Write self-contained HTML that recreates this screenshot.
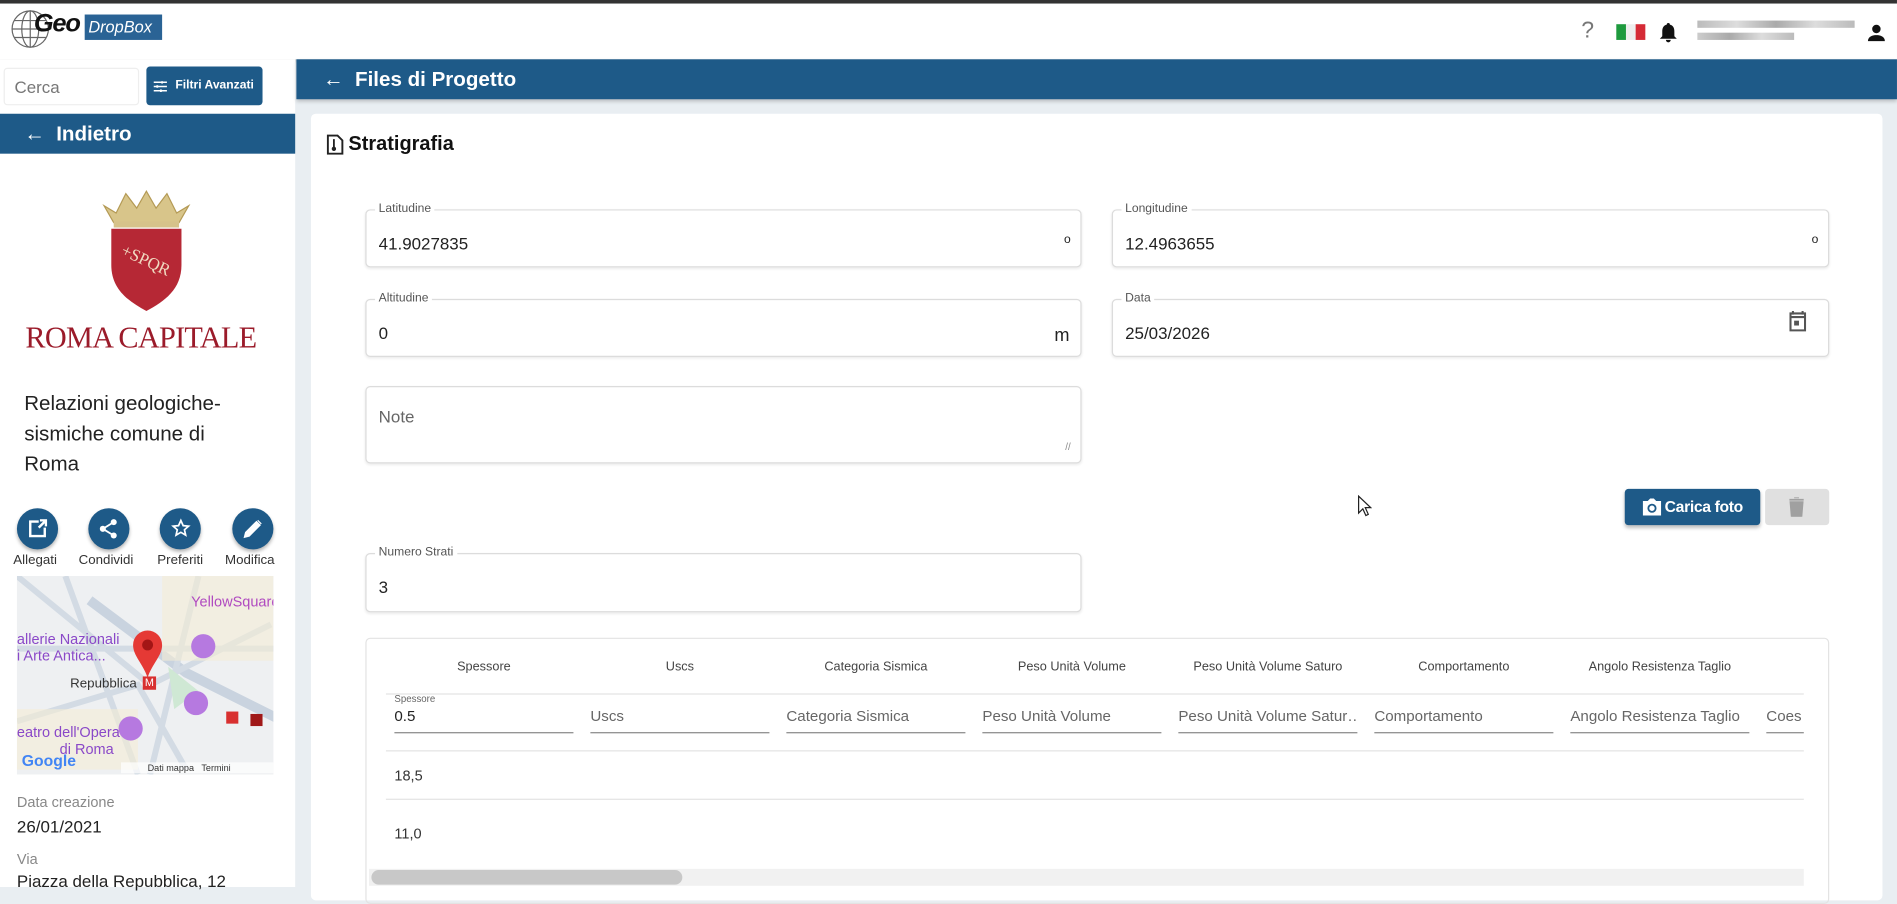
<!DOCTYPE html>
<html><head><meta charset="utf-8">
<style>
*{box-sizing:border-box;margin:0;padding:0}
html,body{width:1897px;height:887px;overflow:hidden;background:#e9eef2}
#s{position:absolute;left:0;top:0;width:1568px;height:733px;transform:scale(1.2098,1.2101);transform-origin:0 0;font-family:"Liberation Sans",sans-serif;color:#222}
.a{position:absolute}
.blue{background:#1e5a88}
.fld{position:absolute;border:1px solid #dcdcdc;border-radius:4px;background:#fff;box-shadow:0 1px 2px rgba(0,0,0,.08)}
.lbl{position:absolute;top:-7px;left:7px;background:#fff;padding:0 3px;font-size:10px;color:#555}
.val{position:absolute;left:10px;font-size:14px;color:#222}
.th{position:absolute;top:545px;font-size:10.5px;color:#444;text-align:center;width:162px}
.ti{position:absolute;top:585px;height:21px;border-bottom:1px solid #888;font-size:12.5px;color:#666;width:148px;white-space:nowrap;overflow:hidden}
.hl{position:absolute;left:319px;width:1172px;height:1px;background:#e3e3e3}
.circ{position:absolute;width:34px;height:34px;border-radius:50%;background:#1e5a88;box-shadow:0 2px 3px rgba(0,0,0,.3)}
.cl{position:absolute;top:457px;font-size:11px;color:#333}
</style></head><body><div id="s">
<!-- header -->
<div class="a" style="left:0;top:0;width:1568px;height:3px;background:#333"></div>
<div class="a" style="left:0;top:3px;width:1568px;height:46px;background:#fff;box-shadow:0 2px 3px rgba(0,0,0,.15)"></div>
<svg class="a" style="left:8px;top:6px" width="36" height="36" viewBox="0 0 36 36"><g fill="none" stroke="#666" stroke-width="1"><circle cx="17" cy="18" r="15"/><ellipse cx="17" cy="18" rx="7" ry="15"/><path d="M2 18h30M4 11h26M4 25h26M17 3v30"/></g></svg>
<div class="a" style="left:28px;top:8px;font-size:21px;font-weight:bold;font-style:italic;color:#111;letter-spacing:-1px">Geo</div>
<div class="a" style="left:70px;top:12px;width:64px;height:21px;background:#2a6395;color:#fff;font-size:13.5px;font-style:italic;padding-left:3px;line-height:21px">DropBox</div>
<div class="a" style="left:1307px;top:15px;font-size:19px;color:#777">?</div>
<div class="a" style="left:1336px;top:20px;width:8px;height:13px;background:#1e9a3e"></div>
<div class="a" style="left:1344px;top:20px;width:8px;height:13px;background:#eee"></div>
<div class="a" style="left:1352px;top:20px;width:8px;height:13px;background:#d52b36"></div>
<svg class="a" style="left:1371px;top:18px" width="16" height="18" viewBox="0 0 16 18"><path d="M8 1c1 0 1.3.6 1.3 1.3C12 3 13 5 13 8v4l2 2H1l2-2V8c0-3 1-5 3.7-5.7C6.7 1.6 7 1 8 1zM6 15h4a2 2 0 01-4 0z" fill="#111"/></svg>
<div class="a" style="left:1403px;top:17px;width:130px;height:6px;background:linear-gradient(90deg,#bbb,#ddd,#aaa,#ddd,#bbb)"></div>
<div class="a" style="left:1403px;top:27px;width:80px;height:6px;background:linear-gradient(90deg,#ccc,#aaa,#ddd,#bbb)"></div>
<svg class="a" style="left:1543px;top:19px" width="16" height="16" viewBox="0 0 16 16"><circle cx="8" cy="5" r="3.5" fill="#111"/><path d="M1 15c0-4 4-5 7-5s7 1 7 5z" fill="#111"/></svg>
<!-- sidebar -->
<div class="a" style="left:0;top:49px;width:244px;height:684px;background:#fff"></div>
<div class="a" style="left:3px;top:56px;width:112px;height:31px;border:1px solid #eee;border-radius:3px;font-size:14px;color:#777;padding:7px 8px">Cerca</div>
<div class="a blue" style="left:121px;top:55px;width:96px;height:32px;border-radius:3px;color:#fff;font-size:10px;font-weight:bold;line-height:32px;padding-left:24px">Filtri Avanzati</div>
<svg class="a" style="left:127px;top:67px" width="11" height="9" viewBox="0 0 11 9"><path d="M0 1h11M0 4.5h11M0 8h11" stroke="#fff" stroke-width="1.2"/><path d="M7 0v2M3 3.5v2M6 7v2" stroke="#fff" stroke-width="1.5"/></svg>
<div class="a blue" style="left:0;top:94px;width:244px;height:33px;color:#fff;font-size:17px;font-weight:bold;line-height:33px;padding-left:20px">←&nbsp; Indietro</div>
<!-- crest -->
<svg class="a" style="left:82px;top:156px" width="78" height="102" viewBox="0 0 78 102"><path d="M4 14l8 14h54l8-14-10 6-8-16-9 12-8-14-8 14-9-12-8 16z" fill="#d8c58a" stroke="#b49a55"/><rect x="12" y="27" width="54" height="5" fill="#d6c28a"/><path d="M10 33h58v30c0 20-14 30-29 38C24 93 10 83 10 63z" fill="#b62835"/><text x="16" y="60" fill="#f0d9c0" font-size="14" font-family="Liberation Serif,serif" transform="rotate(25 30 60)">+SPQR</text></svg>
<div class="a" style="left:21px;top:266px;font-family:'Liberation Serif',serif;font-size:25px;color:#9b1b2a;letter-spacing:-.6px;white-space:nowrap">ROMA CAPITALE</div>
<div class="a" style="left:20px;top:321px;font-size:17px;line-height:25px;color:#222;width:200px">Relazioni geologiche-<br>sismiche comune di<br>Roma</div>
<div class="circ" style="left:14px;top:420px"></div><div class="circ" style="left:73px;top:420px"></div><div class="circ" style="left:132px;top:420px"></div><div class="circ" style="left:192px;top:420px"></div>
<svg class="a" style="left:23px;top:429px" width="16" height="16" viewBox="0 0 16 16"><path d="M9 2H2v12h12V7M9 7l6-6M10 1h5v5" fill="none" stroke="#fff" stroke-width="2"/></svg>
<svg class="a" style="left:81px;top:428px" width="18" height="18" viewBox="0 0 18 18"><circle cx="13" cy="3.5" r="2.5" fill="#fff"/><circle cx="4" cy="9" r="2.5" fill="#fff"/><circle cx="13" cy="14.5" r="2.5" fill="#fff"/><path d="M13 3.5L4 9l9 5.5" stroke="#fff" stroke-width="1.5" fill="none"/></svg>
<svg class="a" style="left:141px;top:428px" width="17" height="17" viewBox="0 0 24 24"><path d="M12 3l2.7 6 6.3.6-4.8 4.2 1.4 6.3L12 16.8 6.4 20.1l1.4-6.3L3 9.6 9.3 9z" fill="none" stroke="#fff" stroke-width="2"/></svg>
<svg class="a" style="left:201px;top:429px" width="16" height="16" viewBox="0 0 16 16"><path d="M1 15l1-4L11 2l3 3-9 9zM12 1l3 3" fill="#fff" stroke="#fff"/></svg>
<div class="cl" style="left:11px">Allegati</div><div class="cl" style="left:65px">Condividi</div><div class="cl" style="left:130px">Preferiti</div><div class="cl" style="left:186px">Modifica</div>
<!-- map -->
<div class="a" style="left:14px;top:476px;width:212px;height:164px;background:#eef0f2;overflow:hidden;white-space:nowrap">
<svg width="212" height="164" viewBox="0 0 212 164"><path d="M60 20l80 60 80 40" stroke="#c9d3df" stroke-width="8" fill="none"/><path d="M0 0l110 90 100-50M0 120l100-30 40 70M40 0l60 164M150 0l-40 164M0 60h212" stroke="#d3dbe4" stroke-width="5" fill="none"/><rect x="120" y="0" width="92" height="70" fill="#f5ecd5" opacity=".6"/><rect x="0" y="110" width="100" height="50" fill="#f5ecd5" opacity=".6"/><path d="M125 75l25 20-20 15z" fill="#cfe8d4"/></svg>
<div class="a" style="left:144px;top:14px;font-size:12px;color:#b04ac0">YellowSquare</div>
<div class="a" style="left:0;top:45px;font-size:12px;color:#8a48c8;line-height:14px">allerie Nazionali<br>i Arte Antica...</div>
<div class="a" style="left:44px;top:83px;font-size:11px;color:#333">Repubblica</div>
<div class="a" style="left:104px;top:83px;width:11px;height:11px;background:#d83030;color:#fff;font-size:9px;line-height:11px;text-align:center">M</div>
<div class="a" style="left:0;top:122px;font-size:12px;color:#8a48c8;line-height:14px;text-align:right;width:80px">eatro dell'Opera<br>di Roma</div>
<svg class="a" style="left:94px;top:44px" width="28" height="40" viewBox="0 0 28 40"><path d="M14 40C10 28 2 22 2 13a12 12 0 0124 0c0 9-8 15-12 27z" fill="#e53935"/><circle cx="14" cy="13" r="4.5" fill="#a31515"/></svg>
<div class="a" style="left:144px;top:48px;width:20px;height:20px;border-radius:50%;background:#b679e0"></div>
<div class="a" style="left:138px;top:95px;width:20px;height:20px;border-radius:50%;background:#b679e0"></div>
<div class="a" style="left:84px;top:116px;width:20px;height:20px;border-radius:50%;background:#b679e0"></div>
<div class="a" style="left:173px;top:112px;width:10px;height:10px;background:#d83030"></div>
<div class="a" style="left:193px;top:114px;width:10px;height:10px;background:#a01818"></div>
<div class="a" style="left:4px;top:145px;font-size:13px;font-weight:bold;color:#4285f4">Google</div>
<div class="a" style="left:86px;top:154px;font-size:7.5px;color:#333;background:rgba(255,255,255,.7);width:126px;padding-left:22px">Dati mappa &nbsp; Termini</div>
</div>
<div class="a" style="left:14px;top:656px;font-size:12px;color:#888">Data creazione</div>
<div class="a" style="left:14px;top:675px;font-size:14px;color:#222">26/01/2021</div>
<div class="a" style="left:14px;top:703px;font-size:12px;color:#888">Via</div>
<div class="a" style="left:14px;top:720px;font-size:14px;color:#222">Piazza della Repubblica, 12</div>
<!-- main -->
<div class="a blue" style="left:245px;top:49px;width:1323px;height:33px;box-shadow:0 2px 3px rgba(0,0,0,.2);color:#fff;font-size:17px;font-weight:bold;line-height:33px;padding-left:22px">←&nbsp; Files di Progetto</div>
<div class="a" style="left:257px;top:94px;width:1299px;height:650px;background:#fff;border-radius:4px"></div>
<svg class="a" style="left:270px;top:111px" width="14" height="17" viewBox="0 0 14 17"><path d="M1 1h8l4 4v11H1z" fill="none" stroke="#222" stroke-width="1.6"/><path d="M6 4v7" stroke="#222" stroke-width="1.5"/><circle cx="6" cy="12" r="1.8" fill="#222"/></svg>
<div class="a" style="left:288px;top:110px;font-size:16.5px;font-weight:bold;color:#111">Stratigrafia</div>

<div class="fld" style="left:302px;top:173px;width:592px;height:48px"><span class="lbl">Latitudine</span><span class="val" style="top:19px">41.9027835</span><span class="a" style="right:8px;top:19px;font-size:10px">o</span></div>
<div class="fld" style="left:919px;top:173px;width:593px;height:48px"><span class="lbl">Longitudine</span><span class="val" style="top:19px">12.4963655</span><span class="a" style="right:8px;top:19px;font-size:10px">o</span></div>
<div class="fld" style="left:302px;top:247px;width:592px;height:48px"><span class="lbl">Altitudine</span><span class="val" style="top:19px">0</span><span class="a" style="right:9px;top:21px;font-size:15px">m</span></div>
<div class="fld" style="left:919px;top:247px;width:593px;height:48px"><span class="lbl">Data</span><span class="val" style="top:19px">25/03/2026</span>
<svg class="a" style="left:558px;top:8px" width="16" height="18" viewBox="0 0 16 18"><path d="M2 3h12v14H2zM2 6h12M4 1v3M12 1v3" fill="none" stroke="#555" stroke-width="1.7"/><rect x="5" y="9" width="4" height="4" fill="#555"/></svg></div>
<div class="fld" style="left:302px;top:319px;width:592px;height:64px"><span class="val" style="top:16px;color:#666">Note</span><span class="a" style="right:8px;bottom:8px;font-size:8px;color:#888">//</span></div>
<div class="a blue" style="left:1343px;top:404px;width:112px;height:30px;border-radius:3px;box-shadow:0 2px 3px rgba(0,0,0,.25);color:#fff;font-size:13px;font-weight:bold;line-height:30px;padding-left:33px;letter-spacing:-.3px">Carica foto</div>
<svg class="a" style="left:1357px;top:410px" width="17" height="17" viewBox="0 0 17 17"><path d="M1 4h4l2-2h3l2 2h4v12H1z" fill="#fff"/><circle cx="8.5" cy="10" r="3" fill="none" stroke="#1e5a88" stroke-width="1.5"/></svg>
<div class="a" style="left:1459px;top:404px;width:53px;height:30px;border-radius:3px;background:#e0e0e0"></div>
<svg class="a" style="left:1479px;top:411px" width="12" height="16" viewBox="0 0 12 16"><path d="M1 4h10l-1 12H2zM0 2h12M4 0h4" stroke="#a0a0a0" fill="#a0a0a0" stroke-width="1.5"/></svg>
<div class="fld" style="left:302px;top:457px;width:592px;height:49px"><span class="lbl">Numero Strati</span><span class="val" style="top:19px">3</span></div>

<div class="a" style="left:302px;top:527px;width:1210px;height:220px;border:1px solid #e3e3e3;border-radius:4px"></div>
<div class="th" style="left:319px">Spessore</div><div class="th" style="left:481px">Uscs</div><div class="th" style="left:643px">Categoria Sismica</div><div class="th" style="left:805px">Peso Unità Volume</div><div class="th" style="left:967px">Peso Unità Volume Saturo</div><div class="th" style="left:1129px">Comportamento</div><div class="th" style="left:1291px">Angolo Resistenza Taglio</div>
<div class="hl" style="top:573px"></div>
<div class="a" style="left:326px;top:573px;font-size:8px;color:#666">Spessore</div>
<div class="ti" style="left:326px;color:#222">0.5</div><div class="ti" style="left:488px">Uscs</div><div class="ti" style="left:650px">Categoria Sismica</div><div class="ti" style="left:812px">Peso Unità Volume</div><div class="ti" style="left:974px">Peso Unità Volume Satur…</div><div class="ti" style="left:1136px">Comportamento</div><div class="ti" style="left:1298px">Angolo Resistenza Taglio</div><div class="ti" style="left:1460px;width:31px">Coes</div>
<div class="hl" style="top:620px"></div>
<div class="a" style="left:326px;top:634px;font-size:12px;color:#333">18,5</div>
<div class="hl" style="top:660px"></div>
<div class="a" style="left:326px;top:682px;font-size:12px;color:#333">11,0</div>
<div class="a" style="left:305px;top:718px;width:1186px;height:14px;background:#f1f1f1"></div>
<div class="a" style="left:307px;top:719px;width:257px;height:12px;border-radius:6px;background:#c8c8c8"></div>
<svg class="a" style="left:1122px;top:409px" width="12" height="18" viewBox="0 0 12 18"><path d="M1 1v14l3.5-3.5 2.5 5.5 2-1-2.5-5.5H11z" fill="#fff" stroke="#222"/></svg>
</div></body></html>
